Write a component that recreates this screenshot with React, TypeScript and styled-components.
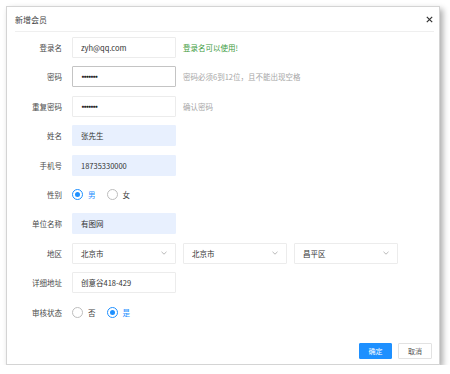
import React from "react";
import styled, { createGlobalStyle } from "styled-components";

const GlobalStyle = createGlobalStyle`
  html, body { margin: 0; padding: 0; background: #fff; }
  body { font-family: "Noto Sans CJK SC", "Noto Sans", sans-serif; color: #333; }
  * { box-sizing: border-box; }
`;

const Dialog = styled.div`
  margin: 6px 0 0 6px;
  width: 434px;
  height: 359px;
  border: 1px solid #d4d4d4;
  background: #fff;
  box-shadow: 3px 3px 6px rgba(0, 0, 0, 0.32);
  display: flex;
  flex-direction: column;
`;

const Header = styled.div`
  height: 25px;
  margin: 0 5px 0 8px;
  border-bottom: 1px solid #efefef;
  display: flex;
  align-items: center;
  justify-content: space-between;
`;

const Title = styled.span`
  font-size: 8px;
  color: #444;
`;

const Close = styled.span`
  display: flex;
  width: 10px;
  height: 10px;
  align-items: center;
  justify-content: center;
`;

const Form = styled.div`
  padding-top: 5px;
  display: flex;
  flex-direction: column;
  gap: 8.4px;
`;

const Row = styled.div`
  display: flex;
  align-items: center;
  height: 21px;
`;

const Label = styled.div`
  width: 55px;
  margin-right: 10px;
  text-align: right;
  font-size: 7.5px;
  color: #4a4a4a;
`;

const Input = styled.input<{ $autofill?: boolean; $focus?: boolean }>`
  width: 104px;
  height: 21px;
  padding: 0 8px;
  font-family: inherit;
  font-size: 7.5px;
  color: #333;
  outline: none;
  border: 1px solid ${(p) => (p.$focus ? "#c4c4c4" : p.$autofill ? "#e8f0fe" : "#ececec")};
  background: ${(p) => (p.$autofill ? "#e8f0fe" : "#fff")};
  border-radius: 1px;
  &[type="password"] {
    font-family: "DejaVu Sans", sans-serif;
    font-size: 6px;
    font-weight: bold;
    letter-spacing: -1.6px;
    color: #222;
  }
`;

const Hint = styled.span<{ $ok?: boolean }>`
  margin-left: 7px;
  font-size: 7.5px;
  color: ${(p) => (p.$ok ? "#3c9a3c" : "#a6a6a6")};
`;

const Selects = styled.div`
  display: flex;
  gap: 7px;
`;

const Select = styled.div`
  width: 104px;
  height: 21px;
  padding: 0 8px;
  border: 1px solid #ececec;
  border-radius: 1px;
  display: flex;
  align-items: center;
  justify-content: space-between;
  font-size: 7.5px;
  color: #333;
`;

const Radios = styled.div`
  display: flex;
  align-items: center;
`;

const Option = styled.label<{ $checked?: boolean }>`
  display: flex;
  align-items: center;
  margin-right: 11px;
  font-size: 7.5px;
  color: ${(p) => (p.$checked ? "#1e90ff" : "#444")};
`;

const Circle = styled.span<{ $checked?: boolean }>`
  width: 11px;
  height: 11px;
  border-radius: 50%;
  border: 1px solid ${(p) => (p.$checked ? "#1e90ff" : "#bdbdbd")};
  margin-right: 5px;
  display: flex;
  align-items: center;
  justify-content: center;
  &::after {
    content: "";
    width: 5px;
    height: 5px;
    border-radius: 50%;
    background: ${(p) => (p.$checked ? "#1e90ff" : "transparent")};
  }
`;

const Footer = styled.div`
  margin-top: auto;
  display: flex;
  justify-content: flex-end;
  gap: 6px;
  padding: 0 7px 5px 0;
`;

const Button = styled.button<{ $primary?: boolean }>`
  height: 16px;
  width: ${(p) => (p.$primary ? "33px" : "34px")};
  padding: 0;
  font-family: inherit;
  font-size: 7px;
  border-radius: 1px;
  border: 1px solid ${(p) => (p.$primary ? "#1e90ff" : "#e2e2e2")};
  background: ${(p) => (p.$primary ? "#1e90ff" : "#fff")};
  color: ${(p) => (p.$primary ? "#fff" : "#555")};
`;

const Chevron = () => (
  <svg width="6" height="4" viewBox="0 0 6 4">
    <path d="M0.5 0.8 L3 3.2 L5.5 0.8" fill="none" stroke="#b0b0b0" strokeWidth="0.9" />
  </svg>
);

const Radio = ({ checked, label }: { checked?: boolean; label: string }) => (
  <Option $checked={checked}>
    <Circle $checked={checked} />
    {label}
  </Option>
);

export default function App() {
  return (
    <>
      <GlobalStyle />
      <Dialog>
        <Header>
          <Title>新增会员</Title>
          <Close>
            <svg width="7" height="7" viewBox="0 0 7 7">
              <path d="M0.8 0.8 L6.2 6.2 M6.2 0.8 L0.8 6.2" stroke="#333" strokeWidth="1.2" />
            </svg>
          </Close>
        </Header>
        <Form>
          <Row>
            <Label>登录名</Label>
            <Input readOnly value="zyh@qq.com" />
            <Hint $ok>登录名可以使用!</Hint>
          </Row>
          <Row>
            <Label>密码</Label>
            <Input readOnly type="password" value="1234567" $focus />
            <Hint>密码必须6到12位，且不能出现空格</Hint>
          </Row>
          <Row>
            <Label>重复密码</Label>
            <Input readOnly type="password" value="1234567" />
            <Hint>确认密码</Hint>
          </Row>
          <Row>
            <Label>姓名</Label>
            <Input readOnly value="张先生" $autofill />
          </Row>
          <Row>
            <Label>手机号</Label>
            <Input readOnly value="18735330000" $autofill />
          </Row>
          <Row>
            <Label>性别</Label>
            <Radios>
              <Radio checked label="男" />
              <Radio label="女" />
            </Radios>
          </Row>
          <Row>
            <Label>单位名称</Label>
            <Input readOnly value="有图网" $autofill />
          </Row>
          <Row>
            <Label>地区</Label>
            <Selects>
              <Select>北京市<Chevron /></Select>
              <Select>北京市<Chevron /></Select>
              <Select>昌平区<Chevron /></Select>
            </Selects>
          </Row>
          <Row>
            <Label>详细地址</Label>
            <Input readOnly value="创意谷418-429" />
          </Row>
          <Row>
            <Label>审核状态</Label>
            <Radios>
              <Radio label="否" />
              <Radio checked label="是" />
            </Radios>
          </Row>
        </Form>
        <Footer>
          <Button $primary>确定</Button>
          <Button>取消</Button>
        </Footer>
      </Dialog>
    </>
  );
}
